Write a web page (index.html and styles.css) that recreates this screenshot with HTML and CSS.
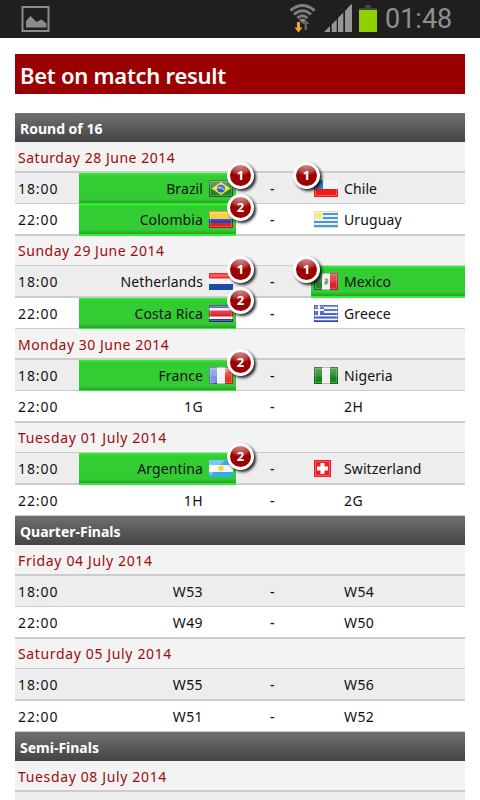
FILE: index.html
```html
<!DOCTYPE html>
<html lang="en">
<head>
<meta charset="utf-8">
<title>Bet on match result</title>
<link rel="stylesheet" href="styles.css">
</head>
<body>
<svg class="defs" aria-hidden="true">
  <defs>
    <linearGradient id="gloss" x1="0" y1="0" x2="0" y2="1">
      <stop offset="0" stop-color="#fff" stop-opacity=".3"/>
      <stop offset=".5" stop-color="#fff" stop-opacity=".12"/>
      <stop offset=".6" stop-color="#fff" stop-opacity="0"/>
    </linearGradient>
    <symbol id="shine" viewBox="0 0 24 17"><path fill="url(#gloss)" d="M0 0h24v17H0z"/><path fill="none" stroke="#000" stroke-opacity=".22" d="M.5.5h23v16H.5z"/><path fill="none" stroke="#fff" stroke-opacity=".22" d="M1.500 1.500h21v14h-21z"/></symbol>
    <symbol id="br" viewBox="0 0 24 17"><path fill="#27812b" d="M0 0h24v17H0z"/><path fill="#e8e337" d="M12 2l9.500 6.500L12 15 2.500 8.500z"/><circle cx="12" cy="8.500" r="4" fill="#2f5fc0"/><path d="M8.500 7.500q4-.5 7 2.500" stroke="#cfe0f5" fill="none"/><use href="#shine"/></symbol>
    <symbol id="cl" viewBox="0 0 24 17"><path fill="#f4f4f4" d="M0 0h24v9H0z"/><path fill="#ee1c1c" d="M0 9h24v8H0z"/><path fill="#2e7fd8" d="M0 0h9v9H0z"/><path fill="none" stroke="#fff" stroke-opacity=".25" d="M1.500 1.500h21v14h-21z"/></symbol>
    <symbol id="co" viewBox="0 0 24 17"><path fill="#fcc410" d="M0 0h24v8H0z"/><path fill="#2442c8" d="M0 8h24v5H0z"/><path fill="#e02020" d="M0 12h24v5H0z"/><use href="#shine"/></symbol>
    <symbol id="uy" viewBox="0 0 24 17"><path fill="#eef3f8" d="M0 0h24v17H0z"/><path fill="#4c97dc" d="M9 2h15v2H9zM9 6h15v2H9zM0 10h24v2H0zM0 14h24v2H0z"/><circle cx="4.700" cy="5" r="3.300" fill="#f6ef66"/><path fill="none" stroke="#8aa" stroke-opacity=".3" d="M.5.5h23v16H.5z"/></symbol>
    <symbol id="nl" viewBox="0 0 24 17"><path fill="#f32525" d="M0 0h24v6H0z"/><path fill="#f4f4f4" d="M0 5.500h24v5.500H0z"/><path fill="#1b4da8" d="M0 11h24v6H0z"/><path fill="#fff" fill-opacity=".25" d="M1 1h22v3H1z"/></symbol>
    <symbol id="mx" viewBox="0 0 24 17"><path fill="#238432" d="M0 0h8v17H0z"/><path fill="#f1f1ee" d="M8 0h8v17H8z"/><path fill="#dc2433" d="M16 0h8v17h-8z"/><path fill="#8b926c" d="M10.500 6l2-1 1.500 1 .5 2.500-1.500 3h-2L10 9l1.500-1z"/><use href="#shine"/></symbol>
    <symbol id="cr" viewBox="0 0 24 17"><path fill="#283d93" d="M0 0h24v17H0z"/><path fill="#f4f4f4" d="M0 3h24v11H0z"/><path fill="#dc1d2d" d="M0 5.500h24v6H0z"/><use href="#shine"/></symbol>
    <symbol id="gr" viewBox="0 0 24 17"><path fill="#f2f5fc" d="M0 0h24v17H0z"/><path fill="#3a59c4" d="M10 0h14v2H10zM10 4h14v2H10zM10 8h14v2H10zM0 11.500h24v2H0zM0 15h24v2H0zM0 0h4v4H0zM6 0h4v4H6zM0 6h4v4H0zM6 6h4v4H6z"/><use href="#shine"/></symbol>
    <symbol id="fr" viewBox="0 0 24 17"><path fill="#4169d0" d="M0 0h8v17H0z"/><path fill="#f0f0f0" d="M8 0h8v17H8z"/><path fill="#ee3029" d="M16 0h8v17h-8z"/><path fill="#fff" fill-opacity=".3" d="M0 0h24L4 17H0z"/><use href="#shine"/></symbol>
    <symbol id="ng" viewBox="0 0 24 17"><path fill="#16851d" d="M0 0h24v17H0z"/><path fill="#f0f0f0" d="M8 0h8v17H8z"/><use href="#shine"/></symbol>
    <symbol id="ar" viewBox="0 0 24 17"><path fill="#38aaf0" d="M0 0h24v17H0z"/><path fill="#f6f7f5" d="M0 5h24v7H0z"/><path fill="#fff" fill-opacity=".35" d="M0 0h16L2 15H0z"/><circle cx="12" cy="8.500" r="2.800" fill="#f5d832"/></symbol>
    <symbol id="ch" viewBox="0 0 17 17"><path fill="#ee1c24" d="M0 0h17v17H0z"/><path fill="#fff" d="M6.500 3h4v3.500H14v4h-3.500V14h-4v-3.500H3v-4h3.500z"/><path fill="none" stroke="#fff" stroke-opacity=".3" d="M1.500 1.500h14v14h-14z"/></symbol>
  </defs>
</svg>

<header class="status">
  <svg class="picture" width="29" height="26" viewBox="0 0 29 26"><path fill="none" stroke="#8c8c8c" stroke-width="2" d="M1.500 1h26v24h-26z"/><path fill="#8c8c8c" d="M5 21.500V15l4.500-5 6 6 5-2.500 5 4v4z"/></svg>
  <svg class="signals" width="90" height="30" viewBox="0 0 90 30">
    <g fill="none" stroke="#7f7f7f" stroke-width="3"><path d="M1.500 6.500Q13.500-3.500 25.500 6.500"/><path d="M5 10.500Q13.500 3 22 10.500"/><path d="M8.500 14Q13.500 9.500 18.500 14"/></g>
    <path fill="#8c8c8c" d="M10 16q3.500-2.500 7 0l-3.500 3z"/>
    <path fill="#636363" d="M15.500 26v-6H13l3.500-4.500 4 4.500H18v6z"/>
    <path fill="#ff9e2a" d="M8 18h3v5.500h2.500l-4 5-4-5H8z"/>
    <path fill="#969696" d="M35 28l6-6v6zM42.700 28v-7.500l5-5V28zM49 28V14l5.300-5.500V28zM56 28V7l6-6.500h1V28z"/>
  </svg>
  <span class="battery"></span>
  <span class="clock">01:48</span>
</header>

<main>
  <h1>Bet on match result</h1>

  <section>
    <h2>Round of 16</h2>
    <h3 class="thick">Saturday 28 June 2014</h3>
    <div class="match odd"><time>18:00</time><div class="home won"><span>Brazil</span><svg class="flag"><use href="#br"/></svg><b class="badge">1</b></div><i>-</i><div class="away"><svg class="flag"><use href="#cl"/></svg><span>Chile</span><b class="badge">1</b></div></div>
    <div class="match thick low"><time>22:00</time><div class="home won"><span>Colombia</span><svg class="flag"><use href="#co"/></svg><b class="badge">2</b></div><i>-</i><div class="away"><svg class="flag"><use href="#uy"/></svg><span>Uruguay</span></div></div>
    <h3>Sunday 29 June 2014</h3>
    <div class="match odd thick low"><time>18:00</time><div class="home"><span>Netherlands</span><svg class="flag"><use href="#nl"/></svg><b class="badge">1</b></div><i>-</i><div class="away won"><svg class="flag"><use href="#mx"/></svg><span>Mexico</span><b class="badge">1</b></div></div>
    <div class="match"><time>22:00</time><div class="home won"><span>Costa Rica</span><svg class="flag"><use href="#cr"/></svg><b class="badge">2</b></div><i>-</i><div class="away"><svg class="flag"><use href="#gr"/></svg><span>Greece</span></div></div>
    <h3 class="thick">Monday 30 June 2014</h3>
    <div class="match odd"><time>18:00</time><div class="home won"><span>France</span><svg class="flag"><use href="#fr"/></svg><b class="badge">2</b></div><i>-</i><div class="away"><svg class="flag"><use href="#ng"/></svg><span>Nigeria</span></div></div>
    <div class="match thick open"><time>22:00</time><div class="home"><span>1G</span></div><i>-</i><div class="away"><span>2H</span></div></div>
    <h3 class="july">Tuesday 01 July 2014</h3>
    <div class="match odd thick low"><time>18:00</time><div class="home won"><span>Argentina</span><svg class="flag"><use href="#ar"/></svg><b class="badge">2</b></div><i>-</i><div class="away"><svg class="flag square"><use href="#ch"/></svg><span>Switzerland</span></div></div>
    <div class="match open"><time>22:00</time><div class="home"><span>1H</span></div><i>-</i><div class="away"><span>2G</span></div></div>
  </section>

  <section>
    <h2>Quarter-Finals</h2>
    <h3 class="thick july">Friday 04 July 2014</h3>
    <div class="match odd open"><time>18:00</time><div class="home"><span>W53</span></div><i>-</i><div class="away"><span>W54</span></div></div>
    <div class="match thick open"><time>22:00</time><div class="home"><span>W49</span></div><i>-</i><div class="away"><span>W50</span></div></div>
    <h3 class="july">Saturday 05 July 2014</h3>
    <div class="match odd thick open"><time>18:00</time><div class="home"><span>W55</span></div><i>-</i><div class="away"><span>W56</span></div></div>
    <div class="match open"><time>22:00</time><div class="home"><span>W51</span></div><i>-</i><div class="away"><span>W52</span></div></div>
  </section>

  <section>
    <h2>Semi-Finals</h2>
    <h3 class="thick july">Tuesday 08 July 2014</h3>
    <div class="match odd open"></div>
  </section>
</main>
</body>
</html>
```
FILE: styles.css
```css
* { box-sizing: border-box; }
body {
  margin: 0;
  height: 800px;
  overflow: hidden;
  background: #fff;
  color: #111;
  font: 14px/20px "Noto Sans", sans-serif;
  letter-spacing: .4px;
}
.defs { position: absolute; width: 0; height: 0; }

.status {
  display: flex;
  height: 38px;
  padding-left: 21px;
  background: #1f1f1f;
}
.picture { margin-top: 6px; }
.signals { margin: 4px 0 0 239px; }
.battery {
  width: 18px;
  height: 27px;
  margin: 5px 0 0 -20px;
  background:
    linear-gradient(#444, #444) 6px 0 / 6px 3px no-repeat,
    linear-gradient(#444 2px, #90d000 2px) 0 3px / 18px 24px no-repeat;
}
.clock {
  margin-left: 8px;
  color: #8f8f8f;
  font: 27px/38px Roboto, sans-serif;
  letter-spacing: 0;
}

main { padding: 16px 15px 0; }
h1, h2, h3 { margin: 0; }
h1 {
  height: 40px;
  margin-bottom: 19px;
  padding-left: 5px;
  background: #9b0000;
  color: #fff;
  font-size: 22px;
  font-weight: 600;
  line-height: 43px;
  letter-spacing: -.27px;
}
h2 {
  height: 29px;
  padding-left: 5px;
  background: linear-gradient(#707070, #444);
  color: #fff;
  font-size: 14px;
  font-weight: 700;
  line-height: 32px;
  letter-spacing: 0;
}
h3 {
  height: 30px;
  padding-left: 3px;
  border-bottom: 1px solid #ccc;
  background: #f3f3f3;
  color: #a00a0a;
  font-size: 14px;
  font-weight: 400;
  line-height: 30px;
  letter-spacing: .52px;
}
h3.thick { height: 31px; border-bottom-width: 2px; line-height: 32px; }
h3.july { letter-spacing: .64px; }

.match {
  --line: 1px;
  display: grid;
  grid-template-columns: 64px 157px 75px 154px;
  grid-template-rows: 100%;
  height: calc(30px + var(--line));
  line-height: 32px;
}
.match.thick { --line: 2px; }
.match > *, .match:empty { border-bottom: var(--line) solid #ccc; }
.odd { background: #ededed; }
time { padding-left: 3px; letter-spacing: .9px; }
i { padding-left: 34px; font-style: normal; font-weight: 500; }
.home, .away { position: relative; display: flex; gap: 6px; letter-spacing: .1px; }
.home { justify-content: flex-end; padding-right: 3px; }
.away { padding-left: 3px; }
.open .home { padding-right: 33px; letter-spacing: .4px; }
.open .away { padding-left: 33px; letter-spacing: .4px; }
.match > .won {
  border-bottom-color: #2df52d;
  background: linear-gradient(#2df52d, #33cc33 3px, #33cc33 26px, #2d9a2d);
}
.flag { width: 24px; height: 17px; margin-top: 7px; }
.flag.square { width: 17px; margin-right: 7px; }

.badge {
  position: absolute;
  z-index: 1;
  top: -11px;
  width: 27px;
  height: 27px;
  border: 3px solid #fff;
  border-radius: 50%;
  background: radial-gradient(ellipse 14px 11px at 50% 0, #d48a8a, #b84444 70%, transparent 100%), #9c0000;
  box-shadow: 2px 2px 3px rgba(0, 0, 0, .85);
  color: #fff;
  font-size: 13px;
  line-height: 21px;
  letter-spacing: 0;
  text-align: center;
}
.low .badge { top: -10px; }
.home .badge { right: -18px; }
.away .badge { left: -18px; }
```
